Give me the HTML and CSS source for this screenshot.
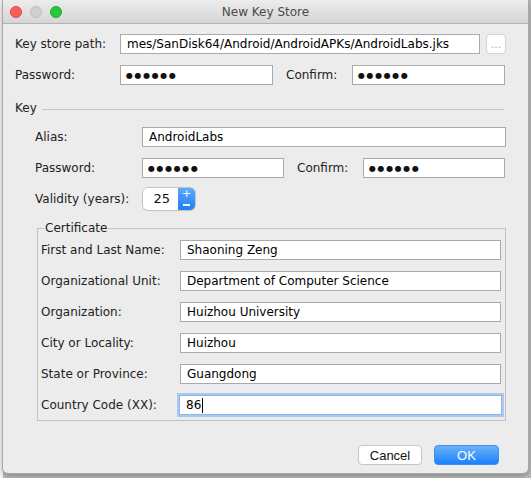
FILE: index.html
```html
<!DOCTYPE html>
<html>
<head>
<meta charset="utf-8">
<link rel="stylesheet" href="styles.css">
</head>
<body>
<div class="desk">
  <div class="window">
    <div class="titlebar">
      <div class="lights">
        <span class="light red"></span>
        <span class="light gray"></span>
        <span class="light green"></span>
      </div>
      <div class="title">New Key Store</div>
    </div>
    <div class="content">
      <div class="row top-row1">
        <label class="lbl w105">Key store path:</label>
        <div class="field path">mes/SanDisk64/Android/AndroidAPKs/AndroidLabs.jks</div>
        <div class="browse">…</div>
      </div>
      <div class="row">
        <label class="lbl w105">Password:</label>
        <div class="field pw1"><span class="dots">●●●●●●</span></div>
        <label class="lbl confirm1">Confirm:</label>
        <div class="field pw1"><span class="dots">●●●●●●</span></div>
      </div>

      <div class="keyhead">
        <span class="keylbl">Key</span>
        <span class="sep"></span>
      </div>

      <div class="keyblock">
        <div class="row">
          <label class="lbl w107">Alias:</label>
          <div class="field grow">AndroidLabs</div>
        </div>
        <div class="row">
          <label class="lbl w107">Password:</label>
          <div class="field pw2"><span class="dots">●●●●●●</span></div>
          <label class="lbl confirm2">Confirm:</label>
          <div class="field pw2"><span class="dots">●●●●●●</span></div>
        </div>
        <div class="row validity">
          <label class="lbl w108">Validity (years):</label>
          <div class="spinner">
            <div class="spin-val">25</div>
            <div class="spin-btn"><span>+</span><span class="minus"></span></div>
          </div>
        </div>
      </div>

      <fieldset class="cert">
        <legend>Certificate</legend>
        <div class="crow"><label class="lbl cl">First and Last Name:</label><div class="field grow">Shaoning Zeng</div></div>
        <div class="crow"><label class="lbl cl">Organizational Unit:</label><div class="field grow">Department of Computer Science</div></div>
        <div class="crow"><label class="lbl cl">Organization:</label><div class="field grow">Huizhou University</div></div>
        <div class="crow"><label class="lbl cl">City or Locality:</label><div class="field grow">Huizhou</div></div>
        <div class="crow"><label class="lbl cl">State or Province:</label><div class="field grow">Guangdong</div></div>
        <div class="crow"><label class="lbl cl">Country Code (XX):</label><div class="field grow focus">86<span class="caret"></span></div></div>
      </fieldset>

      <div class="buttons">
        <div class="btn cancel">Cancel</div>
        <div class="btn ok">OK</div>
      </div>
    </div>
  </div>
</div>
</body>
</html>
```

FILE: styles.css
```css
* { box-sizing: border-box; }
html, body { margin: 0; padding: 0; }
body {
  width: 531px;
  height: 478px;
  overflow: hidden;
  background: #9a9a9a;
  font-family: "DejaVu Sans", "Noto Sans", sans-serif;
  font-size: 12px;
  color: #222;
}
.desk {
  height: 478px;
  padding-left: 3px;
  background: linear-gradient(90deg, #f4f4f4 0 3px, #b9b9b9 3px);
}
.window {
  width: 525px;
  height: 473px;
  background: #ececec;
  border-radius: 0 0 5px 5px;
  box-shadow: 0 0 0 1px #a8a8a8, 0 2px 6px rgba(0,0,0,0.35);
  overflow: hidden;
}
.titlebar {
  height: 24px;
  position: relative;
  background: linear-gradient(#ececec, #d6d6d6);
  border-bottom: 1px solid #b3b3b3;
  display: flex;
  align-items: center;
  justify-content: center;
}
.lights {
  position: absolute;
  left: 7px;
  top: 6px;
  display: flex;
  gap: 8px;
}
.light {
  width: 12px;
  height: 12px;
  border-radius: 50%;
  display: block;
}
.red { background: #fc5f57; border: 1px solid #e0443e; }
.gray { background: #d0d0d0; border: 1px solid #bcbcbc; }
.green { background: #28c83f; border: 1px solid #17ab2b; }
.title {
  font-size: 12px;
  color: #4a4a4a;
  margin-top: 1px;
}
.content {
  padding: 10px 22px 0 12px;
}
.row {
  display: flex;
  align-items: center;
  height: 20px;
  margin-bottom: 11px;
}
.lbl {
  flex: none;
  color: #222;
  white-space: nowrap;
}
.w105 { width: 105px; }
.field {
  height: 20px;
  background: #fff;
  border: 1px solid #aaaaaa;
  padding: 0 6px;
  display: flex;
  align-items: center;
  color: #000;
  font-size: 12px;
  white-space: nowrap;
  overflow: hidden;
}
.path { width: 360px; }
.browse {
  width: 20px;
  height: 20px;
  margin-left: 6px;
  background: #fff;
  border: 1px solid #d2d2d2;
  border-radius: 4px;
  color: #aaa;
  font-size: 10px;
  display: flex;
  align-items: flex-end;
  justify-content: center;
  padding-bottom: 3px;
  line-height: 1;
}
.pw1 { width: 153px; }
.confirm1 { width: 66px; margin-left: 13px; }
.dots {
  font-size: 8px;
  letter-spacing: 1.6px;
  color: #111;
  margin-left: -1px;
}
.keyhead {
  display: flex;
  align-items: center;
  height: 14px;
  margin-top: 16px;
}
.keylbl { width: 27px; }
.sep {
  flex: 1;
  height: 1px;
  background: #c8c8c8;
  margin-top: 3px;
  margin-right: 2px;
}
.keyblock {
  padding-left: 20px;
  margin-top: 12px;
}
.w107 { width: 107px; }
.w108 { width: 108px; }
.grow { flex: 1; }
.pw2 { width: 142px; }
.confirm2 { width: 66px; margin-left: 13px; }
.validity { height: 22px; margin-top: -1px; }
.spinner {
  display: flex;
  height: 22px;
  width: 52px;
  border-radius: 5px;
  box-shadow: 0 0 0 1px #c4c4c4, 0 1px 1px rgba(0,0,0,0.15);
  overflow: hidden;
}
.spin-val {
  flex: 1;
  background: #fff;
  font-size: 13px;
  text-align: right;
  padding-right: 8px;
  line-height: 22px;
  color: #111;
}
.spin-btn {
  width: 17px;
  background: linear-gradient(#5fa9fb, #1c7ff8);
  color: #fff;
  display: flex;
  flex-direction: column;
  align-items: center;
  font-size: 11px;
  line-height: 10px;
  padding-top: 1px;
}
.minus {
  width: 7px;
  height: 1.5px;
  background: #fff;
  margin-top: 5px;
}
.cert {
  margin: 3px 0 0 22px;
  border: 1px solid #c2c2c2;
  padding: 5px 4px 5px 3px;
  min-width: 0;
}
.cert legend {
  padding: 0 1px;
  margin-left: 3px;
  color: #222;
  font-size: 12px;
  line-height: 14px;
}
.crow {
  display: flex;
  align-items: center;
  height: 20px;
  margin-bottom: 11px;
}
.crow:last-child { margin-bottom: 0; }
.cl { width: 139px; }
.focus {
  border-color: #8eb6e4;
  box-shadow: 0 0 0 2px #a9c9f0;
  margin-left: -1px;
  margin-right: -1px;
}
.caret {
  display: inline-block;
  width: 1px;
  height: 15px;
  background: #000;
  margin-left: 1px;
}
.buttons {
  display: flex;
  justify-content: flex-end;
  gap: 12px;
  margin-top: 24px;
  padding-right: 7px;
}
.btn {
  height: 20px;
  border-radius: 4px;
  font-family: "Liberation Sans", Arial, sans-serif;
  font-size: 13px;
  display: flex;
  align-items: center;
  justify-content: center;
}
.cancel {
  width: 64px;
  background: #fff;
  border: 1px solid #c5c5c5;
  color: #111;
}
.ok {
  width: 65px;
  background: linear-gradient(#6cb2fb, #1b81fb);
  border: 1px solid #3d8ff5;
  color: #fff;
}
```
